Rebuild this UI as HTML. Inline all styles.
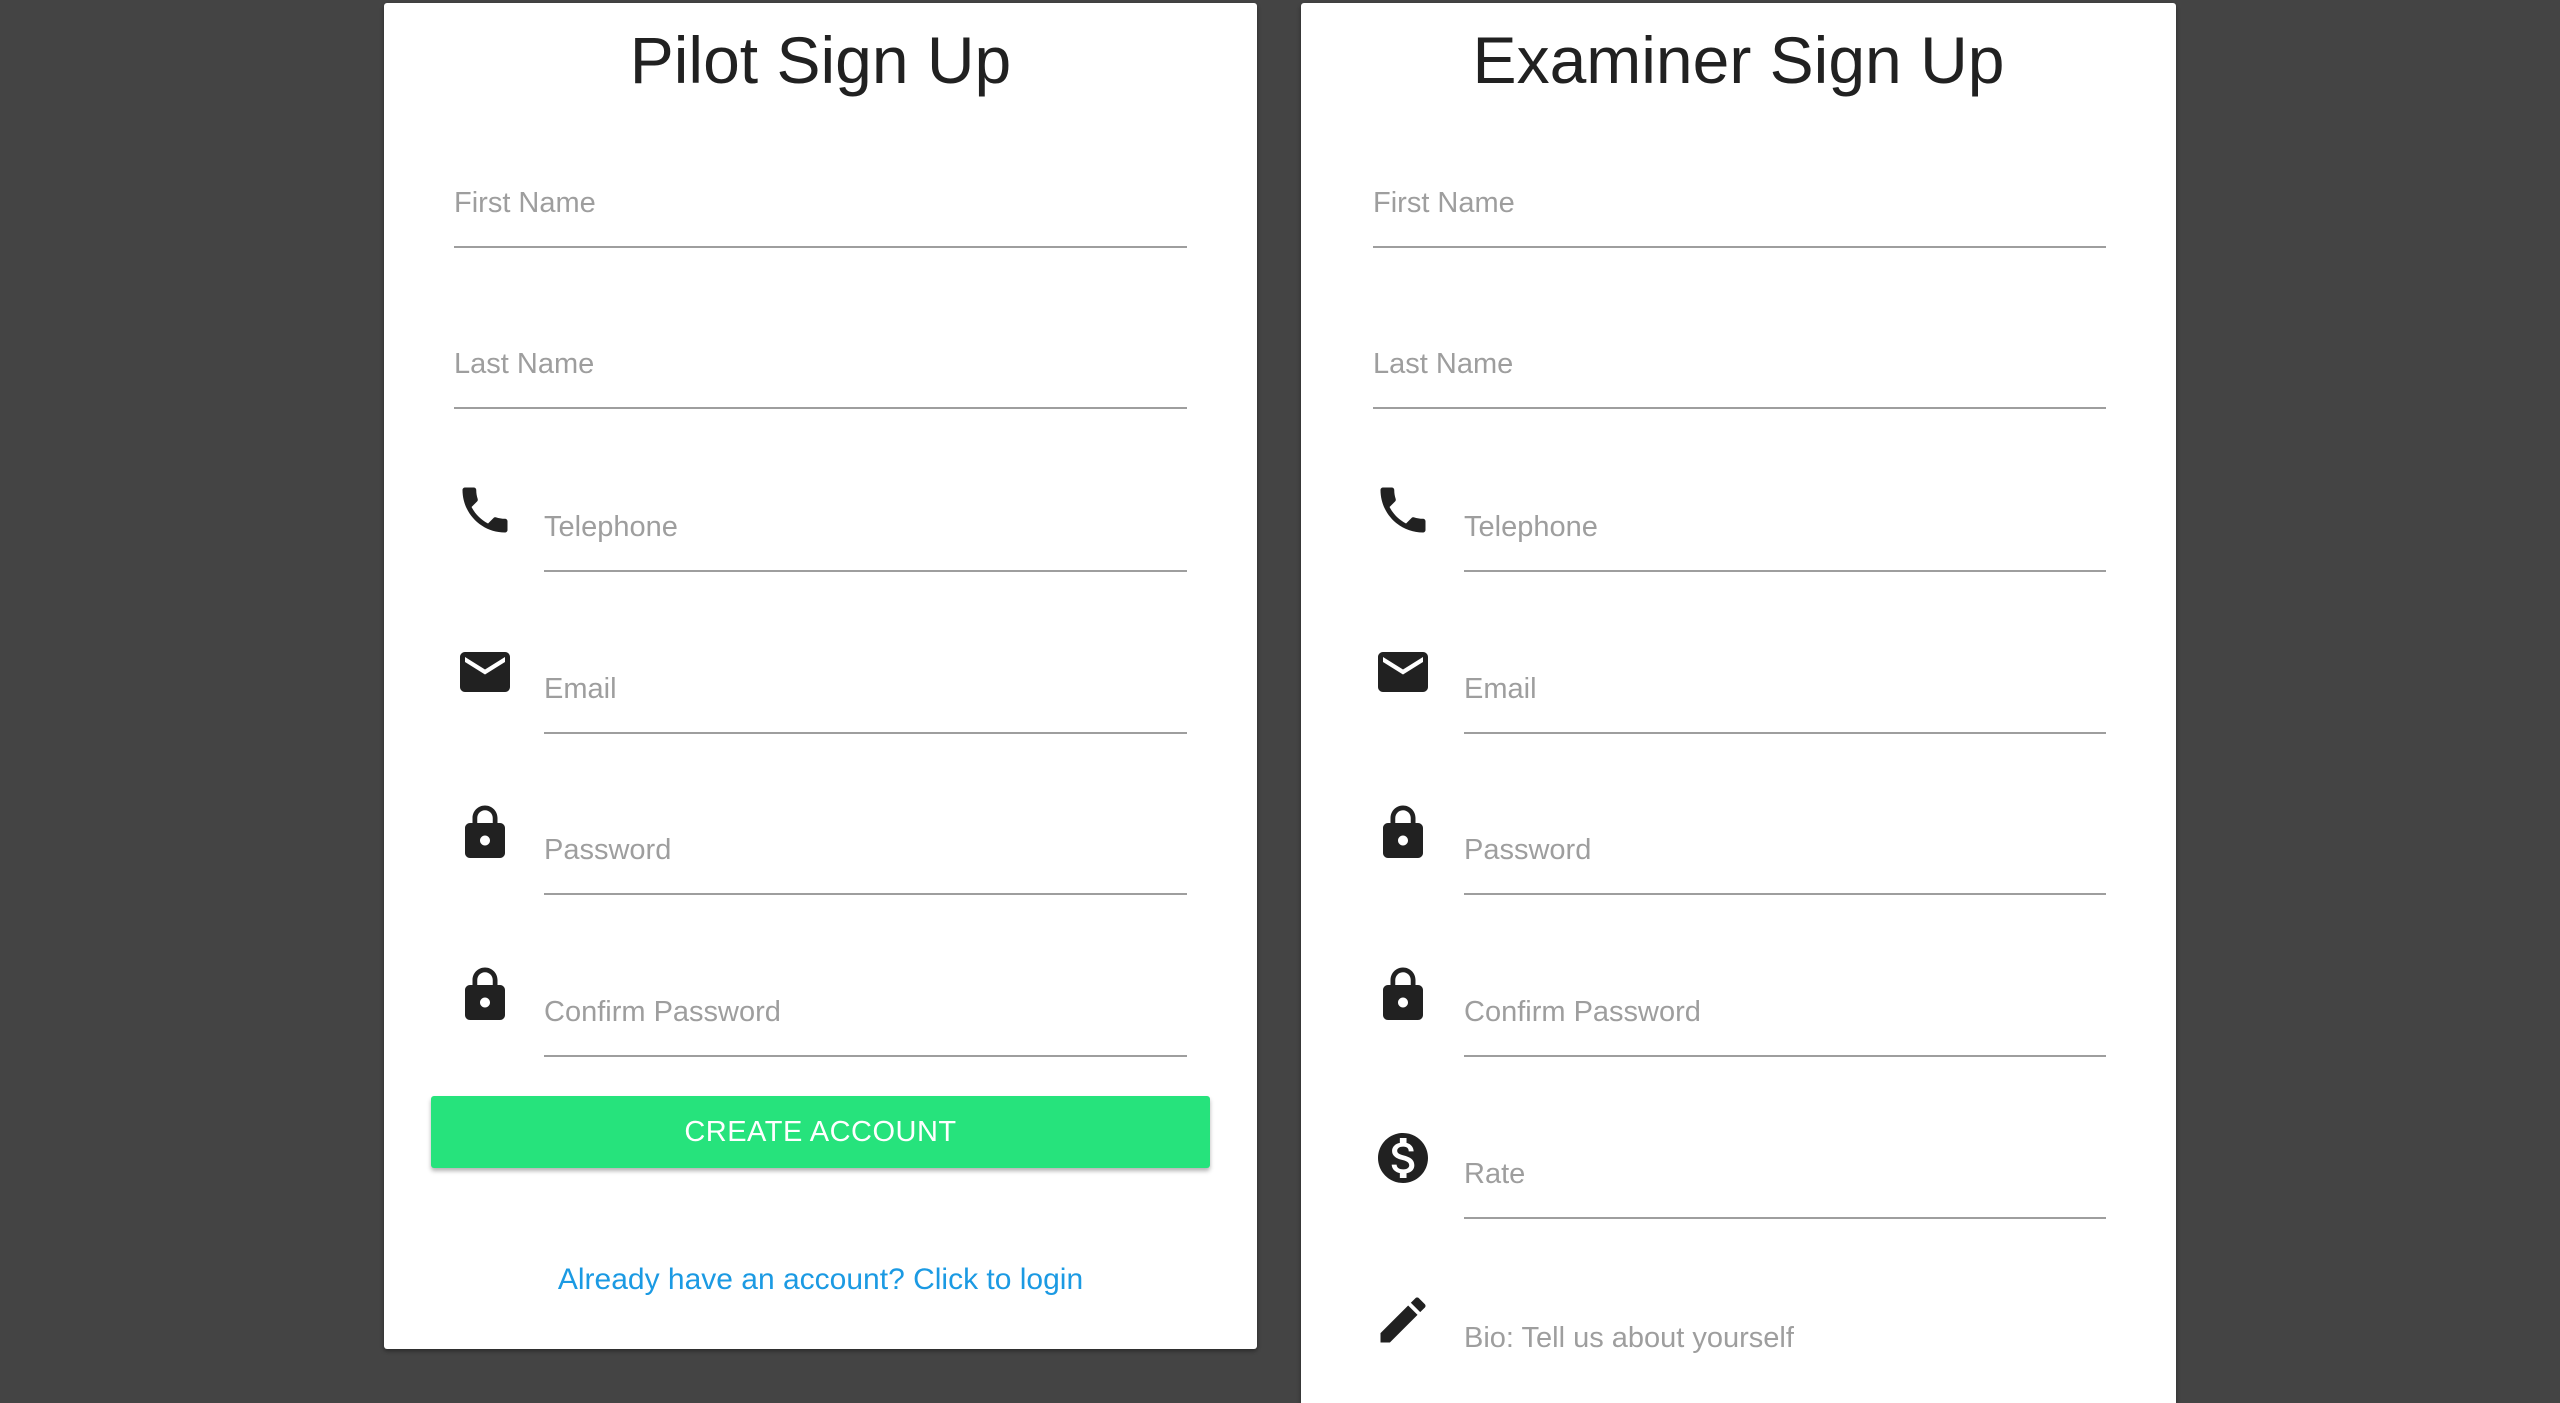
<!DOCTYPE html>
<html><head><meta charset="utf-8"><style>
html,body{margin:0;padding:0;width:2560px;height:1380px;overflow:hidden;background:#444;font-family:"Liberation Sans",Arial,sans-serif;}
.card{position:absolute;background:#fff;box-shadow:0 2px 4px rgba(0,0,0,.4);border-radius:3px;}
h1{position:absolute;left:0;right:0;top:24px;margin:0;text-align:center;font-weight:normal;font-size:66px;line-height:1;color:#212121;}
.lab{position:absolute;font-size:29px;line-height:1;color:#9e9e9e;white-space:nowrap;margin-top:3px;}
.ln{position:absolute;height:2px;background:#9e9e9e;}
svg.ic{position:absolute;width:60px;height:60px;fill:#212121;}
.btn{position:absolute;width:779px;top:1096px;height:72px;background:#26e37c;border-radius:3px;box-shadow:0 3px 4px rgba(0,0,0,.3);color:#fff;font-size:29px;line-height:72px;text-align:center;letter-spacing:0.5px;}
.link{position:absolute;top:1265px;text-align:center;font-size:30px;line-height:1;color:#1b9ae3;}
</style></head><body>

<div class="card" style="left:384px;top:3px;width:873px;height:1346px;">
<h1>Pilot Sign Up</h1>
</div>
<div class="card" style="left:1301px;top:3px;width:875px;height:1400px;border-radius:3px 3px 0 0;">
<h1>Examiner Sign Up</h1>
</div>

<div class="lab" style="left:454px;top:186px">First Name</div><div class="ln" style="left:454px;width:733px;top:246px"></div>
<div class="lab" style="left:454px;top:347px">Last Name</div><div class="ln" style="left:454px;width:733px;top:407px"></div>
<div class="lab" style="left:544px;top:510px">Telephone</div><div class="ln" style="left:544px;width:643px;top:570px"></div>
<div class="lab" style="left:544px;top:672px">Email</div><div class="ln" style="left:544px;width:643px;top:732px"></div>
<div class="lab" style="left:544px;top:833px">Password</div><div class="ln" style="left:544px;width:643px;top:893px"></div>
<div class="lab" style="left:544px;top:995px">Confirm Password</div><div class="ln" style="left:544px;width:643px;top:1055px"></div>

<div class="lab" style="left:1373px;top:186px">First Name</div><div class="ln" style="left:1373px;width:733px;top:246px"></div>
<div class="lab" style="left:1373px;top:347px">Last Name</div><div class="ln" style="left:1373px;width:733px;top:407px"></div>
<div class="lab" style="left:1464px;top:510px">Telephone</div><div class="ln" style="left:1464px;width:642px;top:570px"></div>
<div class="lab" style="left:1464px;top:672px">Email</div><div class="ln" style="left:1464px;width:642px;top:732px"></div>
<div class="lab" style="left:1464px;top:833px">Password</div><div class="ln" style="left:1464px;width:642px;top:893px"></div>
<div class="lab" style="left:1464px;top:995px">Confirm Password</div><div class="ln" style="left:1464px;width:642px;top:1055px"></div>
<div class="lab" style="left:1464px;top:1157px">Rate</div><div class="ln" style="left:1464px;width:642px;top:1217px"></div>
<div class="lab" style="left:1464px;top:1321px">Bio: Tell us about yourself</div>

<svg class="ic" viewBox="0 0 24 24" style="left:455px;top:480px"><path d="M6.62 10.79c1.44 2.83 3.76 5.14 6.59 6.59l2.2-2.2c.27-.27.67-.36 1.02-.24 1.12.37 2.33.57 3.57.57.55 0 1 .45 1 1V20c0 .55-.45 1-1 1-9.39 0-17-7.61-17-17 0-.55.45-1 1-1h3.5c.55 0 1 .45 1 1 0 1.25.2 2.45.57 3.57.11.35.03.74-.25 1.02l-2.2 2.2z"/></svg>
<svg class="ic" viewBox="0 0 24 24" style="left:1373px;top:480px"><path d="M6.62 10.79c1.44 2.83 3.76 5.14 6.59 6.59l2.2-2.2c.27-.27.67-.36 1.02-.24 1.12.37 2.33.57 3.57.57.55 0 1 .45 1 1V20c0 .55-.45 1-1 1-9.39 0-17-7.61-17-17 0-.55.45-1 1-1h3.5c.55 0 1 .45 1 1 0 1.25.2 2.45.57 3.57.11.35.03.74-.25 1.02l-2.2 2.2z"/></svg>

<svg class="ic" viewBox="0 0 24 24" style="left:455px;top:642px"><path d="M20 4H4c-1.1 0-2 .9-2 2v12c0 1.1.9 2 2 2h16c1.1 0 2-.9 2-2V6c0-1.1-.9-2-2-2zm0 4l-8 5-8-5V6l8 5 8-5v2z"/></svg>
<svg class="ic" viewBox="0 0 24 24" style="left:1373px;top:642px"><path d="M20 4H4c-1.1 0-2 .9-2 2v12c0 1.1.9 2 2 2h16c1.1 0 2-.9 2-2V6c0-1.1-.9-2-2-2zm0 4l-8 5-8-5V6l8 5 8-5v2z"/></svg>

<svg class="ic" viewBox="0 0 24 24" style="left:455px;top:803px"><path d="M18 8h-1V6c0-2.76-2.24-5-5-5S7 3.24 7 6v2H6c-1.1 0-2 .9-2 2v10c0 1.1.9 2 2 2h12c1.1 0 2-.9 2-2V10c0-1.1-.9-2-2-2zm-6 9c-1.1 0-2-.9-2-2s.9-2 2-2 2 .9 2 2-.9 2-2 2zm3.1-9H8.9V6c0-1.71 1.39-3.1 3.1-3.1 1.71 0 3.1 1.39 3.1 3.1v2z"/></svg>
<svg class="ic" viewBox="0 0 24 24" style="left:1373px;top:803px"><path d="M18 8h-1V6c0-2.76-2.24-5-5-5S7 3.24 7 6v2H6c-1.1 0-2 .9-2 2v10c0 1.1.9 2 2 2h12c1.1 0 2-.9 2-2V10c0-1.1-.9-2-2-2zm-6 9c-1.1 0-2-.9-2-2s.9-2 2-2 2 .9 2 2-.9 2-2 2zm3.1-9H8.9V6c0-1.71 1.39-3.1 3.1-3.1 1.71 0 3.1 1.39 3.1 3.1v2z"/></svg>

<svg class="ic" viewBox="0 0 24 24" style="left:455px;top:965px"><path d="M18 8h-1V6c0-2.76-2.24-5-5-5S7 3.24 7 6v2H6c-1.1 0-2 .9-2 2v10c0 1.1.9 2 2 2h12c1.1 0 2-.9 2-2V10c0-1.1-.9-2-2-2zm-6 9c-1.1 0-2-.9-2-2s.9-2 2-2 2 .9 2 2-.9 2-2 2zm3.1-9H8.9V6c0-1.71 1.39-3.1 3.1-3.1 1.71 0 3.1 1.39 3.1 3.1v2z"/></svg>
<svg class="ic" viewBox="0 0 24 24" style="left:1373px;top:965px"><path d="M18 8h-1V6c0-2.76-2.24-5-5-5S7 3.24 7 6v2H6c-1.1 0-2 .9-2 2v10c0 1.1.9 2 2 2h12c1.1 0 2-.9 2-2V10c0-1.1-.9-2-2-2zm-6 9c-1.1 0-2-.9-2-2s.9-2 2-2 2 .9 2 2-.9 2-2 2zm3.1-9H8.9V6c0-1.71 1.39-3.1 3.1-3.1 1.71 0 3.1 1.39 3.1 3.1v2z"/></svg>

<svg class="ic" viewBox="0 0 24 24" style="left:1373px;top:1128px"><path d="M12 2C6.48 2 2 6.48 2 12s4.48 10 10 10 10-4.48 10-10S17.52 2 12 2zm1.41 16.09V20h-2.67v-1.93c-1.71-.36-3.16-1.46-3.27-3.4h1.96c.1 1.05.82 1.87 2.65 1.870 1.96 0 2.4-.98 2.4-1.59 0-.83-.44-1.61-2.67-2.14-2.48-.6-4.18-1.62-4.18-3.67 0-1.72 1.39-2.84 3.11-3.21V4h2.67v1.95c1.86.45 2.79 1.86 2.85 3.39H14.3c-.05-1.11-.64-1.87-2.22-1.87-1.5 0-2.4.68-2.4 1.64 0 .84.65 1.39 2.67 1.91s4.18 1.39 4.18 3.91c-.01 1.83-1.38 2.83-3.12 3.16z"/></svg>
<svg class="ic" viewBox="0 0 24 24" style="left:1373px;top:1290px"><path d="M3 17.25V21h3.75L17.81 9.94l-3.75-3.75L3 17.25zM20.71 7.04c.39-.39.39-1.02 0-1.41l-2.34-2.34c-.39-.39-1.02-.39-1.41 0l-1.83 1.83 3.75 3.75 1.83-1.83z"/></svg>

<div class="btn" style="left:431px">CREATE ACCOUNT</div>
<div class="link" style="left:384px;width:873px">Already have an account? Click to login</div>
</body></html>
